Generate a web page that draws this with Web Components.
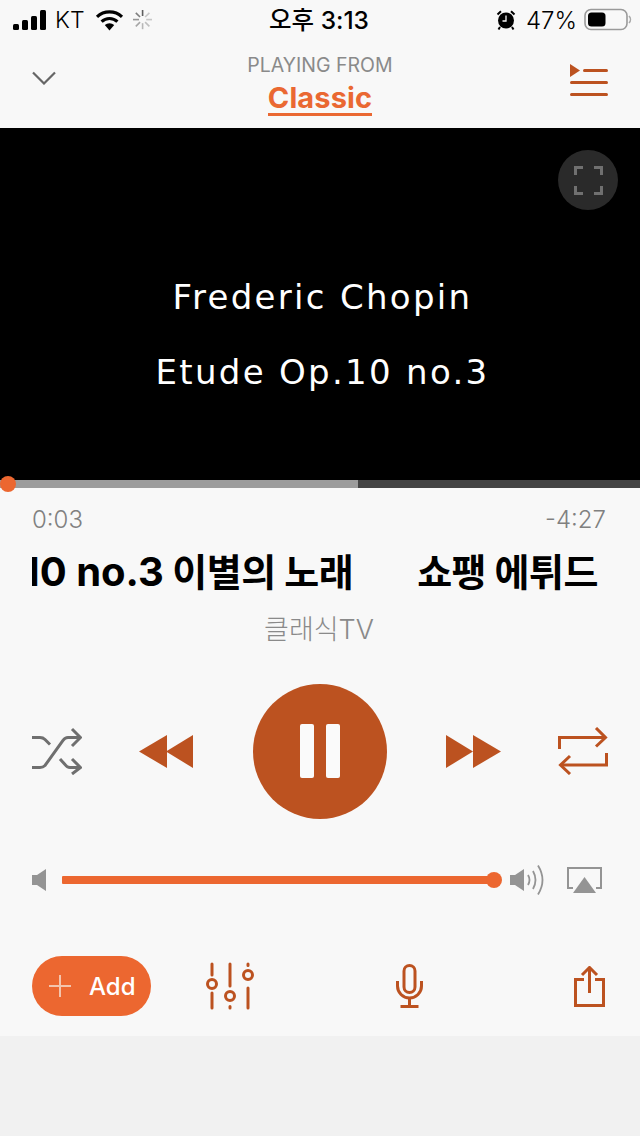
<!DOCTYPE html>
<html lang="ko">
<head>
<meta charset="utf-8">
<title>Player</title>
<style>
  html, body { margin: 0; padding: 0; background: #f1f1f1; }
  body { font-family: Inter, "Noto Sans CJK KR", sans-serif; width: 640px; height: 1136px; overflow: hidden; }
  now-playing { display: block; }
</style>
</head>
<body>
<now-playing>
  <status-bar></status-bar>
  <player-header label="PLAYING FROM" source="Classic"></player-header>
  <video-stage>
    <span>Frederic Chopin</span>
    <span>Etude Op.10 no.3</span>
  </video-stage>
  <seek-bar buffered="358"></seek-bar>
  <track-info elapsed="0:03" remaining="-4:27" artist="클래식TV" title="쇼팽 에튀드 Etude Op.10 no.3 이별의 노래"></track-info>
  <transport-controls></transport-controls>
  <volume-row></volume-row>
  <action-row></action-row>
</now-playing>

<script>
// ── Status Bar ────────────────────────────────────────────────────
class StatusBar extends HTMLElement {
  constructor() {
    super();
    const spokes = Array.from({ length: 8 }, (_, i) => {
      const op = [0.95, 0.3, 0.3, 0.35, 0.4, 0.5, 0.6, 0.75][i];
      return `<rect x="8.8" y="0" width="1.6" height="6" fill="#555" opacity="${op}" transform="rotate(${i * 45} 9.6 9.6)"/>`;
    }).join("");
    this.attachShadow({ mode: "open" }).innerHTML = `
      <style>
        :host { display: block; height: 40px; background: #f8f8f8; color: #000; font-family: Inter, "Noto Sans CJK KR", sans-serif; }
        .bar { position: relative; display: flex; align-items: center; justify-content: space-between; height: 40px; padding: 0 8px 0 13px; }
        .side { display: flex; align-items: center; }
        .carrier { font-size: 23px; margin: 0 10px 0 9px; font-weight: 300; }
        .clock { position: absolute; left: 0; right: 2px; top: 0; line-height: 40px; text-align: center; font-size: 24.5px; font-weight: 500; }
        .pct { font-size: 24px; margin: 0 7px 0 10px; font-weight: 300; }
        svg { display: block; }
      </style>
      <div class="bar">
        <div class="side">
          <svg width="33" height="20" viewBox="0 0 33 20">
            <rect x="0" y="14" width="6" height="6" rx="1.5"/>
            <rect x="9" y="10" width="6" height="10" rx="1.5"/>
            <rect x="18" y="6" width="6" height="14" rx="1.5"/>
            <rect x="27" y="0" width="6" height="20" rx="1.5"/>
          </svg>
          <span class="carrier">KT</span>
          <svg width="29" height="22" viewBox="0 0 29 22">
            <path d="M14.5 21.5 L9.8 16 a7 7 0 0 1 9.4 0 Z"/>
            <path d="M6.6 12.6 a11.6 11.6 0 0 1 15.8 0" fill="none" stroke="#000" stroke-width="3.2"/>
            <path d="M2 7.8 a18.4 18.4 0 0 1 25 0" fill="none" stroke="#000" stroke-width="3.2"/>
          </svg>
          <svg style="margin-left:9px" width="19.2" height="19.2" viewBox="0 0 19.2 19.2">${spokes}</svg>
        </div>
        <div class="clock">오후 3:13</div>
        <div class="side">
          <svg width="20" height="20" viewBox="0 0 20 20">
            <circle cx="10" cy="10.5" r="8"/>
            <path d="M1.5 4.5 L5 1.2 M18.5 4.5 L15 1.2 M4 17 L2.5 19.5 M16 17 L17.5 19.5" stroke="#000" stroke-width="2" fill="none"/>
            <path d="M10 5.5 V11 H6.5" stroke="#f8f8f8" stroke-width="1.3" fill="none"/>
          </svg>
          <span class="pct">47%</span>
          <svg width="48" height="24" viewBox="0 0 48 24">
            <rect x="1" y="1.5" width="42" height="20" rx="6" fill="none" stroke="#9a9a9a" stroke-width="1.6"/>
            <rect x="4" y="4.5" width="17.5" height="14" rx="3.5"/>
            <path d="M45 8 a5 5 0 0 1 0 7" fill="none" stroke="#aaa" stroke-width="1.6"/>
          </svg>
        </div>
      </div>`;
  }
}
customElements.define("status-bar", StatusBar);

// ── Header ────────────────────────────────────────────────────────
class PlayerHeader extends HTMLElement {
  connectedCallback() {
    const label = this.getAttribute("label") ?? "";
    const source = this.getAttribute("source") ?? "";
    this.attachShadow({ mode: "open" }).innerHTML = `
      <style>
        :host { display: block; height: 88px; background: #f8f8f8; font-family: Inter, "Noto Sans CJK KR", sans-serif; }
        .row { display: grid; grid-template-columns: 1fr auto 1fr; align-items: center; height: 88px; padding: 0 32px; }
        .mid { display: flex; flex-direction: column; align-items: center; margin-top: 1px; }
        .label { font-size: 19.5px; line-height: 24px; color: #8a8a8a; font-weight: 400; }
        .source { font-size: 29px; line-height: 34px; font-weight: 700; color: #ea6832; border-bottom: 3px solid #ea6832; margin-top: 4px; height: 32px; letter-spacing: .1px; }
        .down { margin-top: -12px; }
        .queue { justify-self: end; margin-top: -8px; }
        svg { display: block; }
      </style>
      <div class="row">
        <svg class="down" width="24" height="14" viewBox="0 0 24 14"><path d="M1 1.5 L12 12.5 L23 1.5" fill="none" stroke="#666" stroke-width="2.2"/></svg>
        <div class="mid">
          <span class="label">${label}</span>
          <span class="source">${source}</span>
        </div>
        <svg class="queue" width="38" height="32" viewBox="0 0 38 32" fill="#bc5220">
          <path d="M0 0 L10 6.5 L0 13 Z"/>
          <rect x="13" y="5" width="25" height="3" rx="1.5"/>
          <rect x="0" y="17" width="38" height="3" rx="1.5"/>
          <rect x="0" y="29" width="38" height="3" rx="1.5"/>
        </svg>
      </div>`;
  }
}
customElements.define("player-header", PlayerHeader);

// ── Video Stage ───────────────────────────────────────────────────
class VideoStage extends HTMLElement {
  constructor() {
    super();
    this.attachShadow({ mode: "open" }).innerHTML = `
      <style>
        :host { display: block; position: relative; height: 352px; background: #000; }
        .caption { display: flex; flex-direction: column; align-items: center; gap: 29px; padding-top: 146px; padding-left: 5px; color: #fff; font-family: "DejaVu Sans", sans-serif; font-size: 34px; line-height: 46px; letter-spacing: 2.3px; }
        ::slotted(span) { display: block; }
        .fs { position: absolute; top: 22px; right: 22px; width: 60px; height: 60px; border-radius: 50%; background: #2a2a2a; display: grid; place-items: center; }
        svg { display: block; }
      </style>
      <div class="caption"><slot></slot></div>
      <div class="fs">
        <svg width="29" height="29" viewBox="0 0 29 29" fill="none" stroke="#707070" stroke-width="3">
          <path d="M1.5 9 V1.5 H9 M20 1.5 H27.5 V9 M1.5 20 V27.5 H9 M20 27.5 H27.5 V20"/>
        </svg>
      </div>`;
  }
}
customElements.define("video-stage", VideoStage);

// ── Seek Bar ──────────────────────────────────────────────────────
class SeekBar extends HTMLElement {
  connectedCallback() {
    const buffered = this.getAttribute("buffered") ?? "0";
    this.attachShadow({ mode: "open" }).innerHTML = `
      <style>
        :host { display: block; position: relative; height: 8px; background: #444; }
        .buffer { width: ${buffered}px; height: 8px; background: #9c9c9c; }
        .knob { position: absolute; left: 0; top: -4px; width: 16px; height: 16px; border-radius: 50%; background: #ec6730; }
      </style>
      <div class="buffer"></div>
      <div class="knob"></div>`;
  }
}
customElements.define("seek-bar", SeekBar);

// ── Track Info ────────────────────────────────────────────────────
class TrackInfo extends HTMLElement {
  connectedCallback() {
    const get = (n) => this.getAttribute(n) ?? "";
    // latin runs are set a bit larger, the korean glyphs read bigger at the same size
    const title = get("title").replace(/[A-Za-z][\x20-\x7e]*[A-Za-z0-9]/g, (m) => `<b>${m}</b>`);
    this.attachShadow({ mode: "open" }).innerHTML = `
      <style>
        :host { display: block; background: #f8f8f8; height: 172px; padding: 0 32px 0; box-sizing: border-box; font-family: Inter, "Noto Sans CJK KR", sans-serif; }
        .times { display: flex; justify-content: space-between; padding: 19px 2px 0 0; font-size: 24px; line-height: 26px; font-weight: 300; color: #808080; }
        .marquee { overflow: hidden; white-space: nowrap; margin-top: 13px; width: 568px; height: 52px; }
        .track { display: inline-flex; gap: 64px; transform: translateX(-387px); font-size: 38px; line-height: 52px; font-weight: 700; color: #000; letter-spacing: -0.5px; }
        .track b { font-size: 40px; font-weight: 700; letter-spacing: 0; }
        .artist { text-align: center; margin-top: 15px; padding-right: 2px; font-size: 27px; line-height: 34px; font-weight: 300; color: #8a8a8a; }
      </style>
      <div class="times"><span>${get("elapsed")}</span><span>${get("remaining")}</span></div>
      <div class="marquee"><div class="track"><span>${title}</span><span>${title}</span></div></div>
      <div class="artist">${get("artist")}</div>`;
  }
}
customElements.define("track-info", TrackInfo);

// ── Transport ─────────────────────────────────────────────────────
class TransportControls extends HTMLElement {
  constructor() {
    super();
    this.attachShadow({ mode: "open" }).innerHTML = `
      <style>
        :host { display: block; background: #f8f8f8; height: 190px; box-sizing: border-box; padding: 23px 32px 0; }
        .row { display: flex; align-items: center; height: 136px; }
        .pause { width: 134px; height: 135px; margin: 0 59px 0 60px; border-radius: 50%; background: #bc5220; display: flex; justify-content: center; align-items: center; gap: 12px; }
        .pause i { display: block; width: 14px; height: 54px; border-radius: 2px; background: #fafafa; }
        .back { margin-left: 57px; }
        .rep { margin-left: 57px; }
        svg { display: block; flex: none; }
      </style>
      <div class="row">
        <svg width="50" height="48" viewBox="0 0 50 48" fill="none" stroke="#6f6f6f" stroke-width="3">
          <path d="M0 10.5 H8 Q11 10.5 13 12.5 L18 17.5"/>
          <path d="M0 40.5 H8 Q11 40.5 13 38.5 L31 13.5 Q33 10.5 36 10.5 H47"/>
          <path d="M28 32 L33 37.5 Q35 40.5 38 40.5 H47"/>
          <path d="M40 2 L48.5 10.5 L40 19 M40 32 L48.5 40.5 L40 47"/>
        </svg>
        <svg class="back" width="54" height="33" viewBox="0 0 54 33" fill="#bc5220">
          <path d="M0 16.5 L28 0 V33 Z"/>
          <path d="M27 16.5 L54 0 V33 Z"/>
        </svg>
        <div class="pause"><i></i><i></i></div>
        <svg width="55" height="33" viewBox="0 0 55 33" fill="#bc5220">
          <path d="M55 16.5 L27 0 V33 Z"/>
          <path d="M27 16.5 L0 0 V33 Z"/>
        </svg>
        <svg class="rep" width="50" height="48" viewBox="0 0 50 48" fill="none" stroke="#bc5220" stroke-width="3">
          <path d="M1.5 22 V10.5 H47"/>
          <path d="M38 1 L47.5 10.5 L38 19.5"/>
          <path d="M48.5 26 V38 H3"/>
          <path d="M12 29 L2.5 38 L12 47"/>
        </svg>
      </div>`;
  }
}
customElements.define("transport-controls", TransportControls);

// ── Volume ────────────────────────────────────────────────────────
class VolumeRow extends HTMLElement {
  constructor() {
    super();
    this.attachShadow({ mode: "open" }).innerHTML = `
      <style>
        :host { display: block; background: #f8f8f8; height: 60px; box-sizing: border-box; padding: 0 0 0 32px; }
        .row { display: flex; align-items: center; height: 60px; }
        .slider { position: relative; width: 432px; height: 8px; margin: 0 16px; border-radius: 1px; background: #ec6730; }
        .slider i { position: absolute; right: -8px; top: -4px; width: 16px; height: 16px; border-radius: 50%; background: #ec6730; }
        svg { display: block; flex: none; }
      </style>
      <div class="row">
        <svg width="14" height="22" viewBox="0 0 14 22" fill="#949494"><path d="M0 6 H5 L14 0 V22 L5 16 H0 Z"/></svg>
        <div class="slider"><i></i></div>
        <svg width="35" height="30" viewBox="0 0 35 30" fill="none" stroke="#949494" stroke-width="1.8">
          <path d="M0 10 H5 L14 4 V26 L5 20 H0 Z" fill="#949494" stroke="none"/>
          <path d="M18 10 Q21 15 18 20"/>
          <path d="M23 6 Q28 15 23 24"/>
          <path d="M28 0.5 Q37 15 28 29.5"/>
        </svg>
        <svg style="margin-left:22px" width="35" height="26" viewBox="0 0 35 26" fill="#949494">
          <path d="M6 21 H1 V1 H34 V21 H29" fill="none" stroke="#949494" stroke-width="2"/>
          <path d="M17.5 10 L29 26 H6 Z"/>
        </svg>
      </div>`;
  }
}
customElements.define("volume-row", VolumeRow);

// ── Action Row ────────────────────────────────────────────────────
class ActionRow extends HTMLElement {
  constructor() {
    super();
    this.attachShadow({ mode: "open" }).innerHTML = `
      <style>
        :host { display: block; background: #f8f8f8; height: 126px; box-sizing: border-box; padding: 46px 35px 0 32px; font-family: Inter, "Noto Sans CJK KR", sans-serif; }
        .row { display: flex; align-items: center; height: 60px; }
        .add { display: flex; align-items: center; width: 119px; height: 60px; box-sizing: border-box; padding-left: 17px; border-radius: 30px; background: #ec6730; color: #fff; font-size: 24px; font-weight: 500; flex: none; }
        .add svg { margin-right: 18px; }
        .eq { margin-left: 55px; }
        .mic { margin-left: 142px; }
        .share { margin-left: auto; }
        svg { display: block; flex: none; }
      </style>
      <div class="row">
        <div class="add">
          <svg width="22" height="22" viewBox="0 0 22 22" stroke="#f3c4ad" stroke-width="2"><path d="M11 0 V22 M0 11 H22"/></svg>
          <span>Add</span>
        </div>
        <svg class="eq" width="48" height="48" viewBox="0 0 48 48" fill="none" stroke="#bc5220" stroke-width="3" stroke-linecap="round">
          <path d="M6 2 V13 M6 31 V46"/><circle cx="6" cy="22" r="4.5"/>
          <path d="M24 2 V24 M24 44.5 V46"/><circle cx="24" cy="34" r="4.5"/>
          <path d="M42 2 V3.5 M42 26 V46"/><circle cx="42" cy="13" r="4.5"/>
        </svg>
        <svg class="mic" width="27" height="44" viewBox="0 0 27 44" fill="none" stroke="#bc5220" stroke-width="3">
          <rect x="8" y="1.5" width="11" height="27" rx="5.5"/>
          <path d="M1.5 17 V22 a12 12 0 0 0 24 0 V17"/>
          <path d="M13.5 34 V42.5 M4.5 42.5 H22.5"/>
        </svg>
        <svg class="share" width="31" height="41" viewBox="0 0 31 41" fill="none" stroke="#bc5220" stroke-width="3">
          <path d="M10 13.5 H1.5 V39.5 H29.5 V13.5 H21"/>
          <path d="M15.5 27 V2 M8 9 L15.5 1.5 L23 9"/>
        </svg>
      </div>`;
  }
}
customElements.define("action-row", ActionRow);

// Wrapper for the whole screen
class NowPlaying extends HTMLElement {
  constructor() {
    super();
    this.attachShadow({ mode: "open" }).innerHTML = `<style>:host { display: block; }</style><slot></slot>`;
  }
}
customElements.define("now-playing", NowPlaying);
</script>
</body>
</html>
